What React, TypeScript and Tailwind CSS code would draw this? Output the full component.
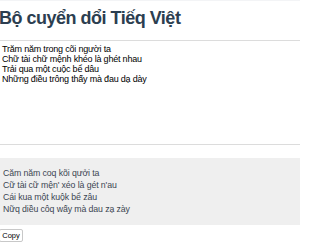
import React, { useState } from "react";

const source = `Trăm năm trong cõi người ta
Chữ tài chữ mệnh khéo là ghét nhau
Trải qua một cuộc bể dâu
Những điều trông thấy mà đau dạ dày`;

const output = [
  "Căm năm coq kõi qưởi ta",
  "Cữ tài cữ mện' xéo là gét n'au",
  "Cái kua một kuộk bể zâu",
  "Nữq diều côq wấy mà dau zạ zày",
];

export default function App() {
  const [text, setText] = useState(source);

  return (
    <div className="w-[300px] h-[250px] overflow-hidden bg-white font-['Liberation_Sans',Arial,sans-serif] border-t border-gray-100">
      <h1 className="text-[18px] font-bold text-[#2c3e50] leading-[26px] tracking-[-0.5px] pt-[4px] -ml-[1px]">
        Bộ cuyển dổi Tiếq Việt
      </h1>

      <textarea
        className="block w-full h-[105px] mt-[9px] px-[2px] py-[3px] text-[9px] leading-[10px] tracking-[-0.2px] text-black border-y border-[#dcdcdc] resize-none outline-none"
        value={text}
        onChange={(e) => setText(e.target.value)}
        spellCheck={false}
      />

      <div className="mt-[13px] bg-[#efefef] pt-[9px] pb-[10px] px-[3px] text-[8.75px] leading-[12px] tracking-[-0.1px] text-[#3c4652]">
        {output.map((line) => (
          <p key={line}>{line}</p>
        ))}
      </div>

      <button className="block mt-[4px] -ml-[1px] w-[24px] h-[13px] text-[7.5px] leading-[11px] text-black bg-white border border-[#c8c8c8] rounded-[2px]">
        Copy
      </button>

      <div className="mt-[8px] h-[4px] bg-[linear-gradient(90deg,#1e1e1e_0%,#2a2a2a_55%,#5a2a2a_60%,#8a8a8a_64%,#9a9a9a_100%)]" />
    </div>
  );
}
